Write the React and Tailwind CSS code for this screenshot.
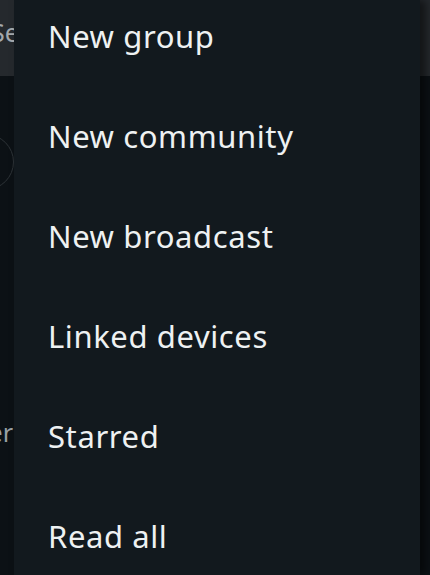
import React from "react";

const items = [
  "New group",
  "New community",
  "New broadcast",
  "Linked devices",
  "Starred",
  "Read all",
];

export default function App() {
  return (
    <div className="relative w-[430px] h-[575px] overflow-hidden bg-[#0c1115]" style={{ fontFamily: "'Noto Sans', Roboto, sans-serif" }}>
      {/* background screen behind the menu */}
      <div className="flex flex-col">
        <div className="h-[76px] bg-[#25292d] flex items-center">
          <span className="-mt-[10px] -ml-[9px] text-[25px] text-[#a4a9ad]">Search</span>
        </div>
        <div className="mt-[58px] ml-[-42px] w-[56px] h-[56px] rounded-full border border-[#2c3236]" />
        <div className="mt-[224px] w-[13px] flex justify-end whitespace-nowrap text-[25px] text-[#9aa0a4]">Other</div>
      </div>

      {/* dropdown menu */}
      <div className="absolute top-0 left-[14px] w-[406px] h-[575px] bg-[#12191e] shadow-[6px_0_8px_rgba(0,0,0,0.5)]">
        <ul className="-mt-[14px]">
          {items.map((label) => (
            <li key={label} className="h-[100px] flex items-center pl-[34px] text-[31px] text-[#eef1f2] tracking-[0.6px]">
              {label}
            </li>
          ))}
        </ul>
      </div>
    </div>
  );
}
